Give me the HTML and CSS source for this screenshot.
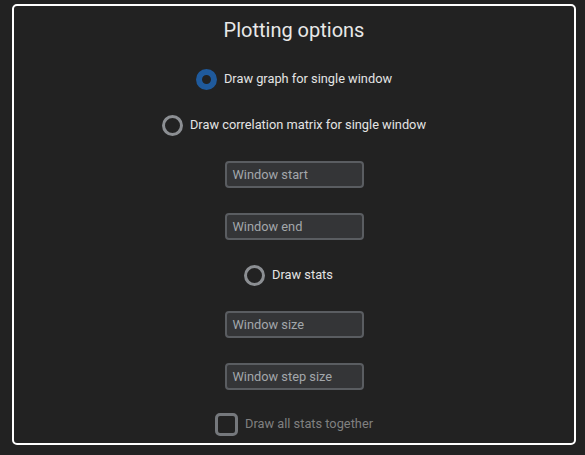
FILE: index.html
```html
<!DOCTYPE html>
<html>
<head>
<meta charset="utf-8">
<link rel="stylesheet" href="styles.css">
</head>
<body>
<div class="panel">
  <h1 class="title">Plotting options</h1>
  <label class="option row-graph">
    <span class="radio radio-checked"></span>
    <span class="label">Draw graph for single window</span>
  </label>
  <label class="option row-matrix">
    <span class="radio"></span>
    <span class="label">Draw correlation matrix for single window</span>
  </label>
  <div class="field row-start"><span class="placeholder">Window start</span></div>
  <div class="field row-end"><span class="placeholder">Window end</span></div>
  <label class="option row-stats">
    <span class="radio"></span>
    <span class="label">Draw stats</span>
  </label>
  <div class="field row-size"><span class="placeholder">Window size</span></div>
  <div class="field row-step"><span class="placeholder">Window step size</span></div>
  <label class="option option-disabled row-all">
    <span class="checkbox"></span>
    <span class="label">Draw all stats together</span>
  </label>
</div>
</body>
</html>
```
FILE: styles.css
```css
html, body {
  margin: 0;
  padding: 0;
  background: #222222;
}
body {
  padding: 4px 0 0 12px;
  font-family: Roboto, "Noto Sans", sans-serif;
  color: #e4e4e4;
}
.panel {
  box-sizing: border-box;
  width: 564px;
  height: 441px;
  border: 2px solid #ffffff;
  border-radius: 5px;
  display: flex;
  flex-direction: column;
  align-items: center;
  padding-top: 10px;
}
.title {
  margin: 0;
  font-size: 20px;
  font-weight: 400;
  line-height: 28px;
  color: #e8e8e8;
}
.option {
  display: flex;
  align-items: center;
  gap: 7px;
  height: 22px;
  font-size: 12.8px;
  line-height: 16px;
}
.radio {
  box-sizing: border-box;
  width: 21px;
  height: 21px;
  border-radius: 50%;
  border: 3px solid #8c8f93;
}
.radio-checked {
  border: 6px solid #1f5a9c;
}
.checkbox {
  box-sizing: border-box;
  width: 23px;
  height: 23px;
  border-radius: 5px;
  border: 3px solid #75787c;
}
.option-disabled .label {
  color: #808080;
}
.field {
  box-sizing: border-box;
  width: 139px;
  height: 27px;
  border: 2px solid #5a5d61;
  border-radius: 4px;
  background: #343537;
  display: flex;
  align-items: center;
  padding-left: 6px;
  font-size: 12.8px;
}
.placeholder {
  color: #a3a7ab;
}
.row-graph { margin-top: 24px; }
.row-matrix { margin-top: 24px; }
.row-start { margin-top: 25px; }
.row-end { margin-top: 25px; }
.row-stats { margin-top: 24px; margin-right: 11px; }
.row-size { margin-top: 25px; }
.row-step { margin-top: 25px; }
.row-all { margin-top: 23px; }
```
